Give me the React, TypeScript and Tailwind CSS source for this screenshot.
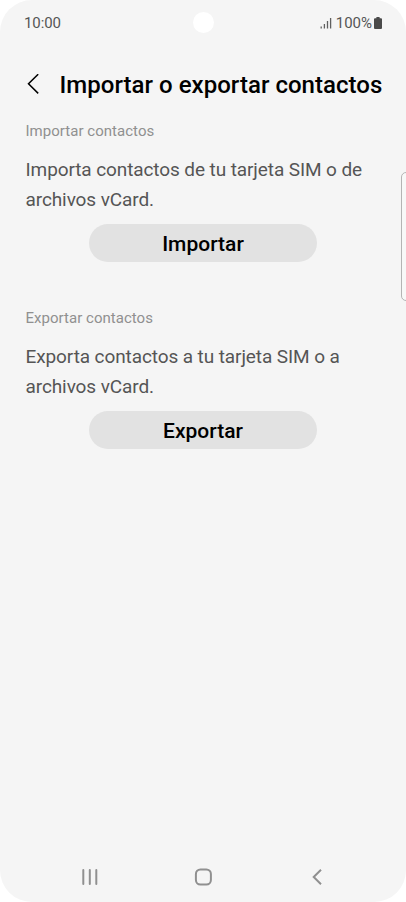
type Section = {
  title: string;
  lines: string[];
  action: string;
};

const sections: Section[] = [
  {
    title: "Importar contactos",
    lines: ["Importa contactos de tu tarjeta SIM o de", "archivos vCard."],
    action: "Importar",
  },
  {
    title: "Exportar contactos",
    lines: ["Exporta contactos a tu tarjeta SIM o a", "archivos vCard."],
    action: "Exportar",
  },
];

function StatusBar() {
  return (
    <div className="relative flex h-[46px] items-center justify-between pl-6 pr-[24px] text-[15px] text-[#555555]">
      <span className="tracking-[-0.1px]">10:00</span>

      {/* Camera hole */}
      <div className="absolute left-[193px] top-[12px] size-[21px] rounded-full bg-white" />

      <div className="flex items-center">
        <svg width="12" height="12" viewBox="0 0 12 12" className="mr-[4px]" fill="none" stroke="#606060" strokeWidth="1.3">
          <path d="M1.2 11.5V9.5M4.4 11.5V7M7.5 11.5V4M10.6 11.5V1" />
        </svg>
        <span>100%</span>
        <svg width="8" height="12" viewBox="0 0 8 12" className="ml-[2px]" fill="#4a4a4a">
          <path d="M2.4 0h3.2v1.2H7a1 1 0 0 1 1 1V11a1 1 0 0 1-1 1H1a1 1 0 0 1-1-1V2.2a1 1 0 0 1 1-1h1.4z" />
        </svg>
      </div>
    </div>
  );
}

function ContactSection({ title, lines, action }: Section) {
  return (
    <section className="flex h-[187px] flex-col">
      <h2 className="pl-[25.500px] text-[15px] leading-5 tracking-[0.03px] text-[#909090]">{title}</h2>
      <p className="mt-[14px] pl-[25.500px] text-[19px] leading-[30px] tracking-[-0.1px] text-[#555555]">
        {lines.map((line) => (
          <span key={line} className="block whitespace-nowrap">
            {line}
          </span>
        ))}
      </p>
      <button className="mt-[9px] ml-[89px] h-[38px] w-[228px] rounded-full bg-[#e2e2e2] pt-[3px] text-[21px] font-medium text-black">
        {action}
      </button>
    </section>
  );
}

function NavBar() {
  return (
    <nav className="flex h-[50px] items-center justify-between px-[80px] text-[#909090]">
      <svg width="20" height="20" viewBox="0 0 20 20" fill="none" stroke="currentColor" strokeWidth="2" strokeLinecap="round">
        <path d="M3.3 3v14M9.8 3v14M16.3 3v14" />
      </svg>
      <svg width="20" height="20" viewBox="0 0 20 20" fill="none" stroke="currentColor" strokeWidth="2">
        <rect x="2.9" y="2.400" width="15" height="15.200" rx="4.500" />
      </svg>
      <svg width="20" height="20" viewBox="0 0 20 20" fill="none" stroke="currentColor" strokeWidth="2">
        <path d="M15 2.700L7.700 10l7.300 7.300" />
      </svg>
    </nav>
  );
}

export default function App() {
  return (
    <div className="h-[902px] w-[406px] bg-white font-['Roboto',sans-serif]">
      <div className="relative flex h-full flex-col overflow-hidden rounded-[32px] bg-[#f5f5f5]">
        <StatusBar />

        <header className="mt-[21px] flex h-9 items-center pl-[26px]">
          <svg width="14" height="22" viewBox="0 0 14 22" fill="none" stroke="#000" strokeWidth="1.500">
            <path d="M12.200 0.200L2.500 9.700l9.700 9.700" />
          </svg>
          <h1 className="ml-[19.500px] whitespace-nowrap text-[24px] font-medium tracking-[0.03px] text-black">
            Importar o exportar contactos
          </h1>
        </header>

        <main className="flex-1 pt-[18px]">
          {sections.map((section) => (
            <ContactSection key={section.title} {...section} />
          ))}
        </main>

        <NavBar />

        {/* Edge panel handle */}
        <div className="absolute -right-2 top-[172px] h-[129px] w-[13px] rounded-[5px] border border-[#b4b4b4] bg-[#f8f8f8]" />
      </div>
    </div>
  );
}
